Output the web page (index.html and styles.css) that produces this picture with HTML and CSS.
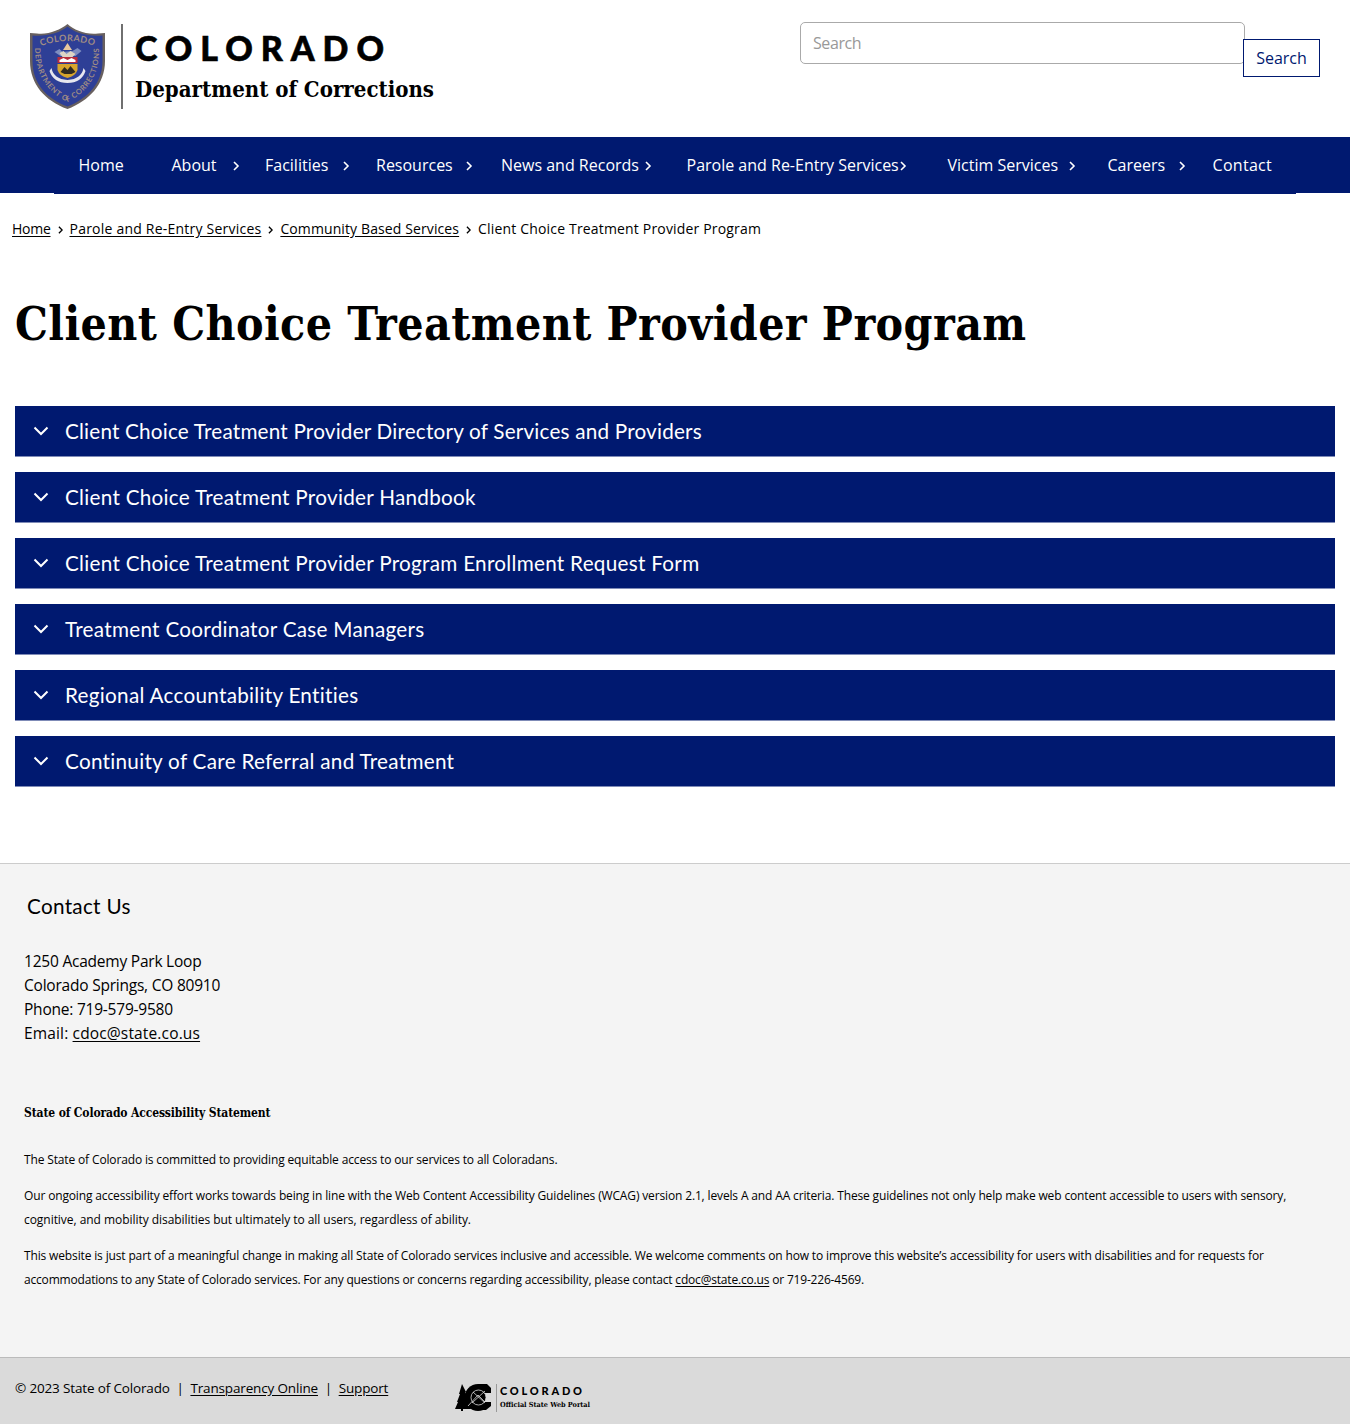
FILE: index.html
```html
<!DOCTYPE html>
<html lang="en">
<head>
<meta charset="utf-8">
<title>Client Choice Treatment Provider Program | Department of Corrections</title>
<link rel="stylesheet" href="styles.css">
</head>
<body>
<svg class="defs" width="0" height="0" aria-hidden="true">
  <symbol id="chevron-right" viewBox="0 0 8 10"><path d="M2 1l4 4-4 4" fill="none" stroke="currentColor" stroke-width="1.6"/></symbol>
  <symbol id="chevron-down" viewBox="0 0 16 10"><path d="M1.500 1.500L8 8l6.500-6.500" fill="none" stroke="currentColor" stroke-width="2"/></symbol>
</svg>
<header class="header">
  <a class="brand" href="#">
    <svg class="brand-logo" viewBox="0 0 410 90" width="410" height="90" role="img" aria-label="Colorado Department of Corrections">
      <path d="M38.500 0C31 6 19 11 8 9.500L1 9V37C1 60 16 77 38.500 85 60 77 76 60 76 37V9L69 9.500C57 11 45 6 38.500 0Z" fill="#68605f"/>
      <path d="M38.500 2.500C31 9 18 12.500 3.500 11.500V37C3.500 59 17 74.500 38.500 82.500 59 74.500 73.500 59 73.500 37V11.500C58 12.500 46 9 38.500 2.500Z" fill="#2e3f96"/>
      <path id="arc-top" d="M12 22Q38.500 12 66 22" fill="none"/>
      <path id="arc-low" d="M6 24C6 48 16 67 38.500 78 61 67 71 48 70 24" fill="none"/>
      <text class="seal-text"><textPath href="#arc-top" textLength="54">COLORADO</textPath></text>
      <text class="seal-small"><textPath href="#arc-low" textLength="133">DEPARTMENT OF CORRECTIONS</textPath></text>
      <g transform="translate(.5 -1)">
        <path d="M38 20l4.500 7h-9z" fill="#e9c89c"/>
        <path d="M25 29l5-3 3 3 10-1 5-3 4 3-6 5H31z" fill="#7d8dc1"/>
        <path d="M30 30l4-2 3 3 4-3 5 3-3 3H33z" fill="#ded5c5"/>
        <path d="M28 34h20v6H28z" fill="#b72d3d"/>
        <path d="M30 37l4-2 4 2 4-2 4 2v2H30z" fill="#fff"/>
        <path d="M28 41h20v6q-2 6-10 8-8-2-10-8z" fill="#d7a52d"/>
        <path d="M31 49l4-5 3 3 3-4 5 6-4 2h-7z" fill="#312b20"/>
        <path d="M22 45q2 11 16 12Q52 56 54 45l2 3q-4 12-18 12T20 48z" fill="#e6e6ef"/>
      </g>
      <path d="M93 0v85" stroke="#222" stroke-width="1.300"/>
      <text class="logo-title" x="106" y="37" textLength="249" lengthAdjust="spacing">COLORADO</text>
      <text class="logo-sub" x="106" y="73" textLength="299" lengthAdjust="spacingAndGlyphs">Department of Corrections</text>
    </svg>
  </a>
  <form class="search">
    <input class="search-input" type="text" placeholder="Search" aria-label="Search">
    <button class="search-button" type="button">Search</button>
  </form>
</header>
<nav class="nav">
  <ul class="nav-list">
    <li><a href="#">Home</a></li>
    <li><a href="#">About</a><svg class="chev"><use href="#chevron-right"/></svg></li>
    <li><a href="#">Facilities</a><svg class="chev"><use href="#chevron-right"/></svg></li>
    <li><a href="#">Resources</a><svg class="chev"><use href="#chevron-right"/></svg></li>
    <li><a href="#">News and Records</a><svg class="chev"><use href="#chevron-right"/></svg></li>
    <li><a href="#">Parole and Re-Entry Services</a><svg class="chev"><use href="#chevron-right"/></svg></li>
    <li><a href="#">Victim Services</a><svg class="chev"><use href="#chevron-right"/></svg></li>
    <li><a href="#">Careers</a><svg class="chev"><use href="#chevron-right"/></svg></li>
    <li><a href="#">Contact</a></li>
  </ul>
</nav>
<div class="breadcrumb">
  <a class="crumb-home" href="#">Home</a><svg class="sep"><use href="#chevron-right"/></svg><a class="crumb-wide" href="#">Parole and Re-Entry Services</a><svg class="sep"><use href="#chevron-right"/></svg><a class="crumb-mid" href="#">Community Based Services</a><svg class="sep"><use href="#chevron-right"/></svg><span>Client Choice Treatment Provider Program</span>
</div>
<main class="main">
  <h1 class="title">Client Choice Treatment Provider Program</h1>
  <div class="accordion">
    <button class="panel panel-long"><svg class="toggle"><use href="#chevron-down"/></svg><span>Client Choice Treatment Provider Directory of Services and Providers</span></button>
    <button class="panel"><svg class="toggle"><use href="#chevron-down"/></svg><span>Client Choice Treatment Provider Handbook</span></button>
    <button class="panel"><svg class="toggle"><use href="#chevron-down"/></svg><span>Client Choice Treatment Provider Program Enrollment Request Form</span></button>
    <button class="panel"><svg class="toggle"><use href="#chevron-down"/></svg><span>Treatment Coordinator Case Managers</span></button>
    <button class="panel"><svg class="toggle"><use href="#chevron-down"/></svg><span>Regional Accountability Entities</span></button>
    <button class="panel"><svg class="toggle"><use href="#chevron-down"/></svg><span>Continuity of Care Referral and Treatment</span></button>
  </div>
</main>
<footer class="footer">
  <h2 class="contact-title">Contact Us</h2>
  <address class="address">1250 Academy Park Loop<br>Colorado Springs, CO 80910<br>Phone: 719-579-9580<br><span class="email">Email: <a href="#">cdoc@state.co.us</a></span></address>
  <h3 class="access-title">State of Colorado Accessibility Statement</h3>
  <div class="access">
    <p>The State of Colorado is committed to providing equitable access to our services to all Coloradans.</p>
    <p>Our ongoing accessibility effort works towards being in line with the Web Content Accessibility Guidelines (WCAG) version 2.1, levels A and AA criteria. These guidelines not only help make web content accessible to users with sensory,<br><span class="loose">cognitive, and mobility disabilities but ultimately to all users, regardless of ability.</span></p>
    <p>This website is just part of a meaningful change in making all State of Colorado services inclusive and accessible. We welcome comments on how to improve this website’s accessibility for users with disabilities and for requests for<br><span class="tight">accommodations to any State of Colorado services. For any questions or concerns regarding accessibility, please contact <a href="#">cdoc@state.co.us</a> or 719-226-4569.</span></p>
  </div>
</footer>
<div class="legal">
  <span class="legal-text">© 2023 State of Colorado &nbsp;|&nbsp; <a href="#">Transparency Online</a> &nbsp;|&nbsp; <a href="#">Support</a></span>
  <svg class="portal" viewBox="0 0 138 32" width="138" height="32" role="img" aria-label="Colorado Official State Web Portal">
    <path d="M7 2l4 8-1 0 4 8-1 0 3 9H8v2H6v-2H0l3-7-1 0 3-8-1 0z"/>
    <circle cx="23" cy="15.500" r="13.500"/>
    <path d="M23 2h9l4 4v5H23zM23 20h13v4l-5 4h-8z"/>
    <path d="M29 11h9v9h-9z" fill="#dadada"/>
    <circle cx="23.500" cy="15.500" r="7.500" stroke="#dadada" stroke-width=".8"/>
    <path d="M13 24l10-11 7 7M18 10l12 11M17 21l13-12" fill="none" stroke="#dadada" stroke-width=".8"/>
    <path d="M41.500 2v28" stroke="#999" stroke-width="1"/>
    <text class="portal-title" x="45" y="13" textLength="82">COLORADO</text>
    <text class="portal-sub" x="45" y="25" textLength="90" lengthAdjust="spacingAndGlyphs">Official State Web Portal</text>
  </svg>
</div>
</body>
</html>
```
FILE: styles.css
```css
* { box-sizing: border-box; }
body { margin: 0; background: #fff; color: #000; font-family: "Open Sans", "Noto Sans", sans-serif; font-size: 16px; }
a { color: inherit; text-underline-offset: 2px; }
.defs { position: absolute; }
.header { display: flex; justify-content: space-between; height: 137px; padding: 22px 30px 0 29px; }
.brand { margin-top: 2px; }
.brand-logo { display: block; overflow: visible; }
.seal-text { font: bold 9px Lato, sans-serif; fill: #a08c84; }
.seal-small { font: bold 7.500px Lato, sans-serif; fill: #a08c84; }
.logo-title { font: 900 34px Lato, sans-serif; stroke: #000; stroke-width: .6px; }
.logo-sub { font: bold 22px "DejaVu Serif Condensed", "DejaVu Serif", serif; }
.search { display: flex; align-items: flex-start; }
.search-input { width: 445px; height: 42px; padding: 0 12px; border: 1px solid #aaa; border-radius: 5px; font: 16px "Open Sans", sans-serif; letter-spacing: -.4px; background: #fff; }
.search-input::placeholder { color: #999; }
.search-button { width: 77px; height: 38px; margin: 17px 0 0 -2px; padding: 0; border: 1px solid #001970; background: #fff; color: #001970; font: 500 16px "Open Sans", sans-serif; }
.nav { height: 56px; background: #001970; color: #fff; }
.nav-list { display: grid; grid-template-columns: 93px 94px 111px 125px 185px 261px 160px 105px 108px; width: 1242px; height: 57px; margin: 0 54px; padding: 0; list-style: none; background: #001970; }
.nav-list li { display: flex; align-items: center; padding: 0 7px 0 24.5px; white-space: nowrap; }
.nav-list li:nth-child(2) { padding-right: 1px; }
.nav-list li:nth-child(3) { padding-right: 2px; }
.nav-list li:nth-child(4) { padding-right: 4px; }
.nav-list li:nth-child(5) { padding-right: 10px; }
.nav-list li:nth-child(6) { padding-right: 18px; }
.nav-list li:nth-child(8) { padding-right: 2px; }
.nav-list li:nth-child(n+3):nth-child(-n+5) { padding-left: 24px; }
.nav-list li:nth-child(9) { letter-spacing: .3px; }
.nav-list a { text-decoration: none; position: relative; top: -1px; }
.chev { flex: none; width: 8px; height: 10px; margin-left: auto; }
.breadcrumb { font-size: 14px; height: 24px; line-height: 24px; margin: 24px 12px 0; display: flex; align-items: center; white-space: nowrap; letter-spacing: .17px; }
.crumb-home { letter-spacing: -.27px; }
.crumb-wide { letter-spacing: .22px; }
.crumb-mid { letter-spacing: .11px; }
.sep { width: 7px; height: 8px; margin: 2px 6px 0; }
.main { padding: 0 15px; height: 622px; }
.title { margin: 0; padding-top: 49px; height: 165px; font: bold 46px/68px "DejaVu Serif Condensed", "DejaVu Serif", serif; letter-spacing: .4px; white-space: nowrap; }
.accordion { display: grid; gap: 16px; }
.panel { display: flex; align-items: center; gap: 16px; height: 50px; padding: 0 18px; border: 0; background: #001970; color: #fff; font: 20.700px Lato, sans-serif; letter-spacing: .28px; text-align: left; white-space: nowrap; box-shadow: 0 .5px 0 #001970; }
.panel-long { letter-spacing: .2px; }
.toggle { width: 16px; height: 10px; }
.footer { height: 494px; padding: 0 24px; border-top: 1px solid #ccc; background: #f4f4f4; white-space: nowrap; }
.contact-title { margin: 0; padding: 26px 3px 0; font: 20.700px/32px Lato, sans-serif; letter-spacing: .3px; }
.address { margin-top: 27px; font-style: normal; font-size: 15.500px; line-height: 24px; letter-spacing: -.22px; }
.email { letter-spacing: .15px; }
.access-title { margin: 56px 0 0; font: bold 12px/24px "DejaVu Serif Condensed", "DejaVu Serif", serif; letter-spacing: -.125px; }
.access { margin-top: 23px; font-size: 12px; line-height: 24px; letter-spacing: -.145px; }
.access p { margin: 0 0 12px; }
.loose { letter-spacing: -.046px; }
.tight { letter-spacing: -.183px; }
.legal { display: flex; height: 67px; border-top: 1px solid #bbb; background: #dadada; padding: 20px 15px 0; font-size: 13.500px; line-height: 20px; white-space: nowrap; }
.legal-text { width: 440px; letter-spacing: -.155px; }
.portal { margin-top: 4px; }
.portal-title { font: 900 11px Lato, sans-serif; }
.portal-sub { font: bold 7px "DejaVu Serif Condensed", "DejaVu Serif", serif; }
```
